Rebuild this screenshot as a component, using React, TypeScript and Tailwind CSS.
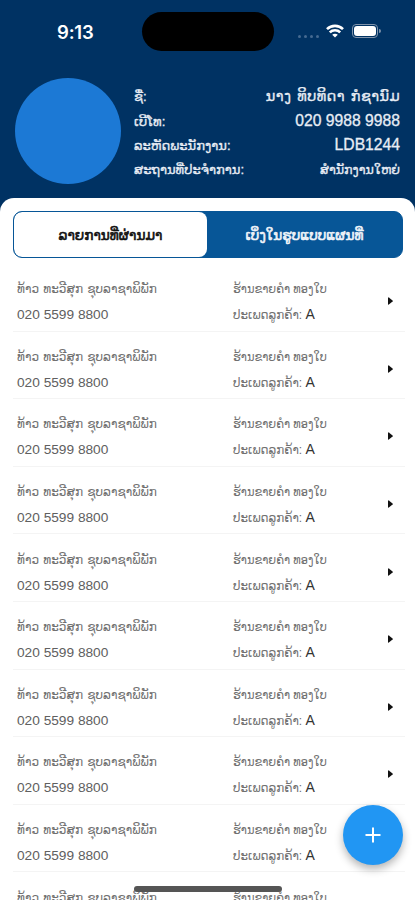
import React from 'react';

const profile = [
  { label: 'ຊື່:', value: 'ນາງ ທິບທິດາ ກໍຊານົມ', valueStyle: 'text-[14.5px] tracking-[0.4px] [word-spacing:1.5px]' },
  { label: 'ເບີໂທ:', value: '020 9988 9988', valueStyle: 'relative -top-px text-[15.7px]' },
  { label: 'ລະຫັດພະນັກງານ:', value: 'LDB1244', valueStyle: 'relative -top-px text-[15.7px]' },
  { label: 'ສະຖານທີ່ປະຈຳການ:', value: 'ສຳນັກງານໃຫຍ່', valueStyle: 'text-[12.7px]' },
];

const customers = Array.from({ length: 10 }, (_, id) => ({
  id,
  name: 'ທ້າວ ທະວີສຸກ ຊຸບລາຊາພິພັກ',
  phone: '020 5599 8800',
  shop: 'ຮ້ານຂາຍຄຳ ທອງໃບ',
  type: 'A',
}));

const StatusBar = () => (
  <div className="flex h-[62px] items-start">
    <div className="ml-[57px] mt-[20px] w-[85px] font-['Inter'] text-[18.5px] font-semibold leading-[24px] tracking-[-0.2px]">
      9:13
    </div>
    <div className="mt-[12px] h-[39px] w-[132px] rounded-full bg-black" />
    <div className="ml-[24px] mt-[35px] flex gap-[3px]">
      {[0, 1, 2, 3].map((dot) => (
        <div key={dot} className="size-[3px] rounded-full bg-[#456a91]" />
      ))}
    </div>
    <svg className="ml-[7px] mt-[24px]" width="18" height="14" viewBox="0 0 18 14" fill="none" stroke="white" strokeWidth="2.6">
      <path d="M1 5.2C5.4.8 12.6.8 17 5.2" />
      <path d="M3.8 8.4C6.6 5.6 11.4 5.6 14.2 8.4" />
      <path d="M6.2 10.8C7.8 9.3 10.2 9.3 11.8 10.8L9 13.6Z" fill="white" stroke="none" />
    </svg>
    <div className="ml-[8px] mt-[24px] flex items-center">
      <div className="h-[14px] w-[26px] rounded-[4px] border border-[#7f93ab] p-px">
        <div className="h-full rounded-[3px] bg-white" />
      </div>
      <div className="ml-px h-[4px] w-[2px] rounded-r-full bg-[#7f93ab]" />
    </div>
  </div>
);

const App = () => {
  return (
    <div className="relative flex h-[900px] w-[415px] flex-col overflow-hidden bg-[#003263] font-['Liberation_Sans','DejaVu_Sans',sans-serif] text-white">
      <StatusBar />
      <div className="flex h-[136px] shrink-0 px-[15px] pt-[16px]">
        <div className="size-[106px] shrink-0 rounded-full bg-[#1c79d5]" />
        <div className="ml-[13px] mt-[7px] flex-1">
          {profile.map((row) => (
            <div
              key={row.label}
              className="flex h-[24.3px] items-center justify-between whitespace-nowrap text-[#e8edf5] [-webkit-text-stroke:0.3px]"
            >
              <span className="text-[13.1px]">{row.label}</span>
              <span className={row.valueStyle}>{row.value}</span>
            </div>
          ))}
        </div>
      </div>
      <div className="flex-1 overflow-hidden rounded-t-[14px] bg-white pl-[13px] pr-[10px] pt-[13px]">
        <div className="flex h-[47px] w-[390px] overflow-hidden rounded-[9px] border border-[#075697] bg-[#075697] text-[13.7px] [-webkit-text-stroke:0.6px]">
          <div className="flex w-[193px] items-center justify-center rounded-[8px] bg-white pt-[4px] text-[#111]">
            ລາຍການທີ່ຜ່ານມາ
          </div>
          <div className="flex flex-1 items-center justify-center pt-[4px] text-[#f0f4fa]">
            ເບິ່ງໃນຮູບແບບແຜນທີ່
          </div>
        </div>
        <div className="mt-[6px]">
          {customers.map((customer) => (
            <div
              key={customer.id}
              className="flex h-[67.6px] items-center whitespace-nowrap border-b border-[#f4f4f4] pt-[10px] text-[#707070]"
            >
              <div className="w-[216px] pl-[4px]">
                <p className="h-[26px] text-[12.1px] leading-[26px] [word-spacing:0.8px]">{customer.name}</p>
                <p className="h-[26px] text-[13.7px] leading-[26px] text-[#606060]">{customer.phone}</p>
              </div>
              <div className="w-[156px] pl-[4px]">
                <p className="h-[26px] text-[11.4px] leading-[26px]">{customer.shop}</p>
                <p className="h-[26px] text-[11.9px] leading-[25px]">
                  ປະເພດລູກຄ້າ: <span className="text-[14px] text-[#333]">{customer.type}</span>
                </p>
              </div>
              <svg className="mb-[2px] ml-[3px]" width="5" height="8" viewBox="0 0 5 8">
                <path d="M0 .8Q0 0 .8.5L4.6 3.5Q5 4 4.6 4.5L.8 7.5Q0 8 0 7.2Z" fill="#111" />
              </svg>
            </div>
          ))}
        </div>
      </div>
      <button className="absolute left-[343px] top-[805px] flex size-[60px] items-center justify-center rounded-full bg-[#2196f3] shadow-[0_4px_8px_rgba(0,0,0,0.3)]">
        <svg width="16" height="16" viewBox="0 0 16 16" stroke="white" strokeWidth="2">
          <path d="M8 .5V15.5M.5 8H15.5" />
        </svg>
      </button>
      <div className="absolute left-[134px] top-[886px] h-[6px] w-[148px] rounded-full bg-[#555]" />
    </div>
  );
};

export default App;
